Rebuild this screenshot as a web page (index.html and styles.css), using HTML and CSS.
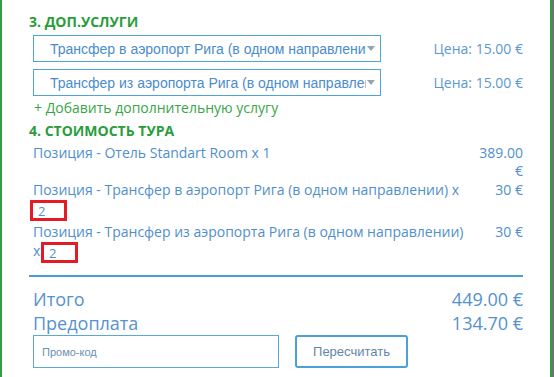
FILE: index.html
```html
<!DOCTYPE html>
<html>
<head>
    <title>Бронирование тура</title>
    <link rel="stylesheet" href="styles.css">
</head>
<body>
    <div class="panel">
        <h3 class="step-title">3. Доп.услуги</h3>
        <div class="service-list">
            <div class="service-row">
                <div class="service-select">
                    <span class="service-name">Трансфер в аэропорт Рига (в одном направлении)</span>
                    <span class="arrow"></span>
                </div>
                <div class="service-price">Цена: 15.00 €</div>
            </div>
            <div class="service-row">
                <div class="service-select">
                    <span class="service-name">Трансфер из аэропорта Рига (в одном направлении)</span>
                    <span class="arrow"></span>
                </div>
                <div class="service-price">Цена: 15.00 €</div>
            </div>
            <a class="add-service" href="#">+ Добавить дополнительную услугу</a>
        </div>

        <h3 class="step-title">4. Стоимость тура</h3>
        <div class="positions">
            <div class="position">
                <div class="position-name">Позиция - Отель Standart Room x 1</div>
                <div class="position-price">389.00 €</div>
            </div>
            <div class="position">
                <div class="position-name">Позиция - Трансфер в аэропорт Рига (в одном направлении) x <input class="qty" type="text" value="2"></div>
                <div class="position-price">30 €</div>
            </div>
            <div class="position">
                <div class="position-name">Позиция - Трансфер из аэропорта Рига (в одном направлении) x <input class="qty" type="text" value="2"></div>
                <div class="position-price">30 €</div>
            </div>
        </div>

        <div class="totals">
            <div class="total-row">
                <span>Итого</span>
                <span>449.00 €</span>
            </div>
            <div class="total-row">
                <span>Предоплата</span>
                <span>134.70 €</span>
            </div>
        </div>

        <div class="promo">
            <input class="promo-input" type="text" placeholder="Промо-код">
            <button class="recalc">Пересчитать</button>
        </div>
    </div>
</body>
</html>
```

FILE: styles.css
```css
body {
    margin: 0;
    padding: 0;
    background-color: #6f7370;
    font-family: "Open Sans", Arial, sans-serif;
}

.panel {
    width: 552px;
    min-height: 377px;
    box-sizing: border-box;
    padding: 13px 27px 0 27px;
    background-color: #fff;
    border-left: 2px solid #2f9e44;
    border-right: 2px solid #2f9e44;
}

.step-title {
    margin: 0;
    color: #2a9d3c;
    font-size: 14px;
    font-weight: bold;
    text-transform: uppercase;
    line-height: 18px;
}

.service-list {
    padding-left: 4px;
    margin-top: 4px;
}

.service-row {
    display: flex;
    align-items: center;
    margin-bottom: 7px;
}

.service-select {
    display: flex;
    align-items: center;
    width: 348px;
    height: 27px;
    box-sizing: border-box;
    border: 1px solid #4fa3d9;
    padding: 0 5px 0 16px;
    font-family: "Liberation Sans", Arial, sans-serif;
    font-size: 14px;
    color: #4a8ccc;
}

.service-name {
    flex: 1;
    overflow: hidden;
    white-space: nowrap;
}

.arrow {
    width: 0;
    height: 0;
    margin-left: 1px;
    border-left: 4px solid transparent;
    border-right: 4px solid transparent;
    border-top: 5px solid #9aa3ab;
}

.service-price {
    flex: 1;
    text-align: right;
    font-size: 14px;
    color: #5b97d0;
}

.add-service {
    display: block;
    margin: -5px 0 4px 1px;
    color: #3aa448;
    font-size: 14px;
    text-decoration: none;
    line-height: 20px;
}

.positions {
    padding-left: 4px;
    padding-top: 4px;
    border-bottom: 2px solid #4a9fd6;
    padding-bottom: 10px;
}

.position {
    display: flex;
    justify-content: space-between;
    font-size: 14px;
    line-height: 18px;
    color: #4f8fcb;
    margin-bottom: 1px;
}

.position-name {
    width: 436px;
}

.position-price {
    width: 48px;
    text-align: right;
}

.qty {
    width: 24px;
    height: 15px;
    margin: 1px 0 1px -3px;
    padding: 0 2px 0 5px;
    border: 3px solid #e31b23;
    font-family: "Open Sans", Arial, sans-serif;
    font-size: 13px;
    color: #4f8fcb;
    vertical-align: middle;
}

.totals {
    margin: 10px 0 0 4px;
}

.total-row {
    display: flex;
    justify-content: space-between;
    font-size: 18px;
    line-height: 24px;
    color: #5592cd;
}

.promo {
    display: flex;
    align-items: center;
    margin: 0 0 0 4px;
}

.promo-input {
    width: 246px;
    height: 33px;
    box-sizing: border-box;
    border: 1px solid #5aa7da;
    padding: 0 8px;
    font-family: "Liberation Sans", Arial, sans-serif;
    font-size: 11px;
}

.promo-input::placeholder {
    color: #6d8fb2;
}

.recalc {
    width: 113px;
    height: 33px;
    margin-left: 16px;
    background-color: #fff;
    border: 2px solid #4aa0d8;
    border-radius: 3px;
    font-family: "Liberation Sans", Arial, sans-serif;
    font-size: 13px;
    color: #6385ab;
}
```
